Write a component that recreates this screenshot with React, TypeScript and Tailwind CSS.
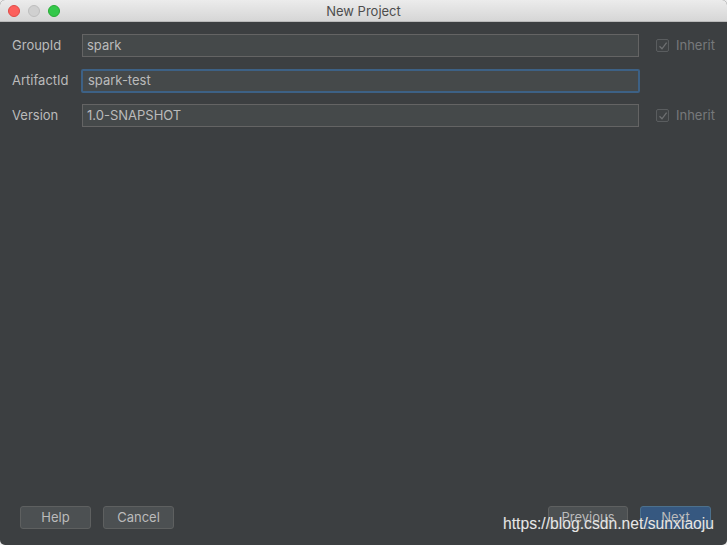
const Field = ({
  label,
  value,
  focused,
  inherit,
}: {
  label: string;
  value: string;
  focused?: boolean;
  inherit?: boolean;
}) => (
  <div className="flex items-center h-[23px]">
    <span className="w-[70px] shrink-0 text-[13px] text-[#bbbbbb]">{label}</span>
    <div
      className={
        focused
          ? "w-[559px] h-[24px] -ml-px flex items-center pl-[5px] bg-[#45494a] border-2 border-[#3d6185] rounded-[2px] text-[13px] text-[#bbbbbb]"
          : "w-[557px] h-[23px] flex items-center pl-[4px] bg-[#45494a] border border-[#646464] text-[13px] text-[#bbbbbb]"
      }
    >
      {value}
    </div>
    {inherit && (
      <div className="flex items-center ml-[17px] gap-[7px]">
        <div className="w-[13px] h-[13px] border border-[#5a5d5f] rounded-[2px] bg-[#3f4244] flex items-center justify-center">
          <svg width="10" height="10" viewBox="0 0 10 10">
            <path d="M1.5 5.2 L4 7.8 L8.6 1.6" fill="none" stroke="#6e7072" strokeWidth="1.3" />
          </svg>
        </div>
        <span className="text-[13px] text-[#77797b]">Inherit</span>
      </div>
    )}
  </div>
);

const Btn = ({ label, primary, w }: { label: string; primary?: boolean; w: string }) => (
  <div
    className={`${w} h-[23px] flex items-center justify-center rounded-[3px] text-[13px] ${
      primary
        ? "bg-[#365880] border border-[#4c708c] text-[#bbbbbb]"
        : "bg-[#4c5052] border border-[#5e6060] text-[#bbbbbb]"
    }`}
  >
    {label}
  </div>
);

export default function App() {
  return (
    <div
      className="w-[727px] h-[545px] bg-[#ececec]"
      style={{ fontFamily: "Inter, 'Liberation Sans', sans-serif" }}
    >
      <div className="relative w-full h-full flex flex-col rounded-[5px] overflow-hidden bg-[#3c3f41]">
        <div className="h-[22px] shrink-0 flex items-center relative bg-gradient-to-b from-[#ececec] to-[#d6d6d6] border-b border-[#b9b9b9]">
          <div className="flex gap-[8px] ml-[8px]">
            <span className="w-[12px] h-[12px] rounded-full bg-[#fc605c] border border-[#de4a46]" />
            <span className="w-[12px] h-[12px] rounded-full bg-[#d0d0d0] border border-[#bdbdbd]" />
            <span className="w-[12px] h-[12px] rounded-full bg-[#34c84a] border border-[#27aa35]" />
          </div>
          <span className="absolute inset-0 pt-[2px] flex items-center justify-center text-[13px] text-[#4d4d4d]">
            New Project
          </span>
        </div>
        <div className="flex flex-col gap-[12px] pl-[12px] pt-[12px]">
          <Field label="GroupId" value="spark" inherit />
          <Field label="ArtifactId" value="spark-test" focused />
          <Field label="Version" value="1.0-SNAPSHOT" inherit />
        </div>
        <div className="flex-1" />
        <div className="flex items-center justify-between pl-[20px] pr-[16px] pb-[16px]">
          <div className="flex gap-[12px]">
            <Btn label="Help" w="w-[71px]" />
            <Btn label="Cancel" w="w-[71px]" />
          </div>
          <div className="flex gap-[12px]">
            <Btn label="Previous" w="w-[80px]" />
            <Btn label="Next" w="w-[71px]" primary />
          </div>
        </div>
        <span
          className="absolute left-[503px] top-[512px] text-[15.7px] text-[#e6e6e6]"
          style={{ fontFamily: "'Liberation Sans', sans-serif", textShadow: "0 0 1px #555" }}
        >
          https://blog.csdn.net/sunxiaoju
        </span>
      </div>
    </div>
  );
}
